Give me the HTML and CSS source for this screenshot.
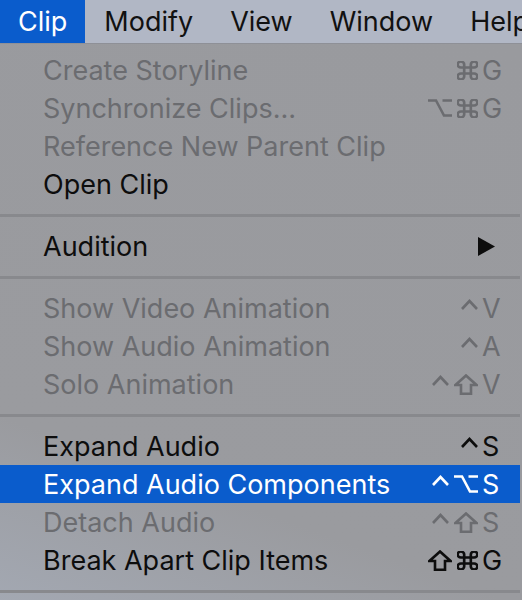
FILE: index.html
```html
<!DOCTYPE html>
<html lang="en">
<head>
  <meta charset="UTF-8" />
  <title>Clip menu</title>
  <link rel="stylesheet" href="styles.css">
</head>
<body>

<div class="menubar">
  <span class="bar-item active">Clip</span>
  <span class="bar-item">Modify</span>
  <span class="bar-item">View</span>
  <span class="bar-item">Window</span>
  <span class="bar-item">Help</span>
</div>

<div class="menu">
  <div class="item disabled">
    <span class="label">Create Storyline</span>
    <span class="mods">
      <svg class="cmd" width="21" height="19" viewBox="2.5 2.5 19 19" preserveAspectRatio="none"><path d="M15 6v12a3 3 0 1 0 3-3H6a3 3 0 1 0 3 3V6a3 3 0 1 0-3 3h12a3 3 0 1 0-3-3"/></svg>
    </span>
    <span class="key">G</span>
  </div>
  <div class="item disabled">
    <span class="label">Synchronize Clips…</span>
    <span class="mods">
      <svg width="24" height="20" viewBox="0 0 24 20"><path d="M0 2.5H8L16 17.5H24M14.5 2.5H24"/></svg>
      <svg class="cmd" width="21" height="19" viewBox="2.5 2.5 19 19" preserveAspectRatio="none"><path d="M15 6v12a3 3 0 1 0 3-3H6a3 3 0 1 0 3 3V6a3 3 0 1 0-3 3h12a3 3 0 1 0-3-3"/></svg>
    </span>
    <span class="key">G</span>
  </div>
  <div class="item disabled"><span class="label">Reference New Parent Clip</span></div>
  <div class="item"><span class="label">Open Clip</span></div>

  <div class="sep"></div>

  <div class="item">
    <span class="label">Audition</span>
    <span class="key"><svg class="arrow" width="17" height="19" viewBox="0 0 17 19"><polygon points="0,0 17,9.5 0,19"/></svg></span>
  </div>

  <div class="sep"></div>

  <div class="item disabled">
    <span class="label">Show Video Animation</span>
    <span class="mods">
      <svg class="ctrl" width="17" height="20" viewBox="0 0 17 20"><path d="M1 11L8.5 3L16 11"/></svg>
    </span>
    <span class="key">V</span>
  </div>
  <div class="item disabled">
    <span class="label">Show Audio Animation</span>
    <span class="mods">
      <svg class="ctrl" width="17" height="20" viewBox="0 0 17 20"><path d="M1 11L8.5 3L16 11"/></svg>
    </span>
    <span class="key">A</span>
  </div>
  <div class="item disabled">
    <span class="label">Solo Animation</span>
    <span class="mods">
      <svg class="ctrl" width="17" height="20" viewBox="0 0 17 20"><path d="M1 11L8.5 3L16 11"/></svg>
      <svg width="24" height="21" viewBox="0 0 24 21"><path d="M12 1.5L22.5 11H17V19.8H7V11H1.5Z"/></svg>
    </span>
    <span class="key">V</span>
  </div>

  <div class="sep"></div>

  <div class="item">
    <span class="label">Expand Audio</span>
    <span class="mods">
      <svg class="ctrl" width="17" height="20" viewBox="0 0 17 20"><path d="M1 11L8.5 3L16 11"/></svg>
    </span>
    <span class="key">S</span>
  </div>
  <div class="item selected">
    <span class="label">Expand Audio Components</span>
    <span class="mods">
      <svg class="ctrl" width="17" height="20" viewBox="0 0 17 20"><path d="M1 11L8.5 3L16 11"/></svg>
      <svg width="24" height="20" viewBox="0 0 24 20"><path d="M0 2.5H8L16 17.5H24M14.5 2.5H24"/></svg>
    </span>
    <span class="key">S</span>
  </div>
  <div class="item disabled">
    <span class="label">Detach Audio</span>
    <span class="mods">
      <svg class="ctrl" width="17" height="20" viewBox="0 0 17 20"><path d="M1 11L8.5 3L16 11"/></svg>
      <svg width="24" height="21" viewBox="0 0 24 21"><path d="M12 1.5L22.5 11H17V19.8H7V11H1.5Z"/></svg>
    </span>
    <span class="key">S</span>
  </div>
  <div class="item">
    <span class="label">Break Apart Clip Items</span>
    <span class="mods">
      <svg width="24" height="21" viewBox="0 0 24 21"><path d="M12 1.5L22.5 11H17V19.8H7V11H1.5Z"/></svg>
      <svg class="cmd" width="21" height="19" viewBox="2.5 2.5 19 19" preserveAspectRatio="none"><path d="M15 6v12a3 3 0 1 0 3-3H6a3 3 0 1 0 3 3V6a3 3 0 1 0-3 3h12a3 3 0 1 0-3-3"/></svg>
    </span>
    <span class="key">G</span>
  </div>

  <div class="sep"></div>
</div>

</body>
</html>
```

FILE: styles.css
```css
body {
  margin: 0;
  font-family: Inter, "Liberation Sans", sans-serif;
  font-size: 27px;
  background: #999a9e;
  overflow: hidden;
}

.menubar {
  display: flex;
  gap: 1px;
  height: 43px;
  background: #b1b7c5;
  border-bottom: 1px solid #8e9097;
  overflow: hidden;
}

.bar-item {
  display: flex;
  align-items: center;
  padding: 0 18px;
  color: #111;
  white-space: nowrap;
}

.bar-item.active {
  background: #0a5ccc;
  color: white;
}

.menu {
  padding-top: 7px;
  background: linear-gradient(20deg, #a3a8b2 0%, #9a9b9f 25%, #999a9e 100%);
  margin-right: 2px;
}

.item {
  display: flex;
  align-items: center;
  height: 38px;
  padding: 0 14px 0 43px;
  color: #0d0d0d;
}

.item.disabled {
  color: #6b6c70;
}

.item.selected {
  background: #0a5ccc;
  color: white;
}

.label {
  flex: 1;
  white-space: nowrap;
}

.mods {
  display: flex;
  align-items: center;
  gap: 5px;
}

.mods svg {
  fill: none;
  stroke: currentColor;
  stroke-width: 2.6;
}

.mods svg.cmd {
  stroke-width: 2.4;
}

.key {
  display: flex;
  align-items: center;
  width: 24px;
  padding-left: 4px;
}

.arrow {
  fill: currentColor;
  margin-left: -4px;
}

.sep {
  height: 24px;
  display: flex;
  align-items: center;
}

.sep::before {
  content: "";
  flex: 1;
  height: 3px;
  background: #88898d;
}
```
